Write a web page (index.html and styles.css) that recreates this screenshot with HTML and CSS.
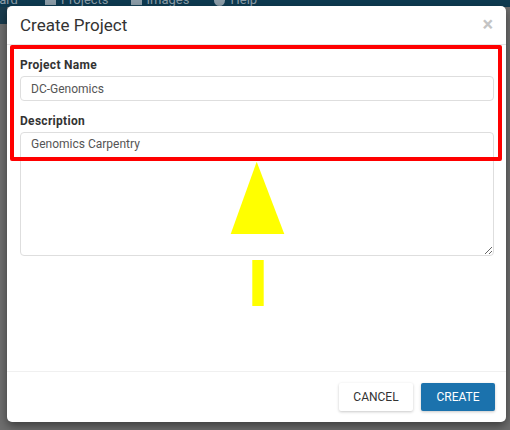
FILE: index.html
```html
<!DOCTYPE html>
<html>
<head>
<meta charset="utf-8">
<title>Create Project</title>
<link rel="stylesheet" href="styles.css">
</head>
<body>
<div class="page">
  <nav class="topnav">
    <div class="nav-inner">
      <span class="nav-item nav-dash">Dashboard</span>
      <span class="nav-item nav-projects"><svg class="nav-icon" viewBox="0 0 12 12"><path d="M0 2h4l1 1.5h7V11H0z" fill="currentColor"/></svg>Projects</span>
      <span class="nav-item nav-images"><svg class="nav-icon" viewBox="0 0 12 12"><rect x="0" y="1" width="12" height="10" fill="currentColor"/></svg>Images</span>
      <span class="nav-item nav-help"><svg class="nav-icon" viewBox="0 0 12 12"><circle cx="6" cy="6" r="6" fill="currentColor"/></svg>Help</span>
    </div>
  </nav>
  <div class="side-strip"></div>
</div>

<div class="modal">
  <div class="modal-header">
    <h4 class="modal-title">Create Project</h4>
    <span class="close">&times;</span>
  </div>
  <div class="modal-body">
    <div class="form-group">
      <label class="field-label" for="pname">Project Name</label>
      <input id="pname" class="form-control" type="text" value="DC-Genomics">
    </div>
    <div class="form-group">
      <label class="field-label" for="pdesc">Description</label>
      <textarea id="pdesc" class="form-control textarea">Genomics Carpentry</textarea>
    </div>
  </div>
  <div class="modal-footer">
    <button class="btn btn-default">CANCEL</button>
    <button class="btn btn-primary">CREATE</button>
  </div>
</div>

<div class="highlight"></div>
<svg class="arrow" width="56" height="146" viewBox="0 0 56 146">
  <polygon points="26.7,0.7 0.7,73 54.3,73" fill="#ffff00"/>
  <rect x="22.3" y="99" width="11.4" height="46" fill="#ffff00"/>
</svg>
</body>
</html>
```

FILE: styles.css
```css
html, body {
  margin: 0;
  padding: 0;
}
body {
  width: 510px;
  height: 430px;
  background: #6e6e6e;
  font-family: Roboto, "Liberation Sans", sans-serif;
  overflow: hidden;
  position: relative;
}
.page {
  display: flex;
  flex-direction: column;
}
.topnav {
  height: 7px;
  background: #0e3a50;
  overflow: hidden;
}
.nav-inner {
  display: flex;
  align-items: center;
  margin-top: -7px;
  margin-left: -45px;
  color: #8b9ca7;
  font-size: 13px;
  line-height: 14px;
  white-space: nowrap;
}
.nav-item {
  display: flex;
  align-items: center;
  gap: 5px;
}
.nav-projects { margin-left: 27px; }
.nav-images { margin-left: 22px; }
.nav-help { margin-left: 25px; }
.nav-icon {
  width: 11px;
  height: 11px;
}
.side-strip {
  width: 7px;
  height: 17px;
  background: #1a3c4e;
}

.modal {
  position: absolute;
  top: 6px;
  left: 7px;
  width: 499px;
  height: 416px;
  background: #fff;
  border-radius: 5px;
  box-shadow: 0 4px 10px rgba(0, 0, 0, 0.45);
  display: flex;
  flex-direction: column;
  box-sizing: border-box;
}
.modal-header {
  display: flex;
  align-items: center;
  justify-content: space-between;
  padding: 9px 13px 9px 13px;
  border-bottom: 1px solid #e5e5e5;
}
.modal-title {
  margin: 0;
  font-size: 17px;
  line-height: 20px;
  font-weight: 400;
  color: #333;
}
.close {
  font-size: 20px;
  line-height: 20px;
  font-weight: 700;
  color: #c4c4c4;
  margin-top: -3px;
}
.modal-body {
  flex: 1;
  padding: 12px 12px 0 13px;
}
.form-group {
  margin-bottom: 11px;
}
.form-group + .form-group {
  padding-top: 1px;
}
.field-label {
  display: block;
  font-size: 12px;
  line-height: 16px;
  font-weight: 700;
  letter-spacing: 0.3px;
  color: #333;
  margin-bottom: 3px;
}
.form-control {
  display: block;
  width: 100%;
  box-sizing: border-box;
  height: 25px;
  border: 1px solid #dedede;
  border-radius: 4px;
  padding: 0 10px;
  font-family: Roboto, "Liberation Sans", sans-serif;
  font-size: 12px;
  line-height: 16px;
  color: #555;
  background: #fff;
  margin: 0;
}
.textarea {
  height: 124px;
  padding: 3px 10px;
  resize: vertical;
}
.modal-footer {
  display: flex;
  justify-content: flex-end;
  gap: 8px;
  padding: 11px 11px 11px 12px;
  border-top: 1px solid #f0f0f0;
}
.btn {
  width: 74px;
  height: 28px;
  border: none;
  border-radius: 2px;
  font-family: Roboto, "Liberation Sans", sans-serif;
  font-size: 12px;
  font-weight: 400;
  padding: 0;
  box-shadow: 0 1px 3px rgba(0, 0, 0, 0.22);
}
.btn-default {
  background: #fff;
  color: #333;
}
.btn-primary {
  background: #1b72ad;
  color: #fff;
}

.highlight {
  position: absolute;
  left: 10px;
  top: 45px;
  width: 492px;
  height: 116px;
  box-sizing: border-box;
  border: 4px solid #ff0000;
  border-radius: 2px;
}
.arrow {
  position: absolute;
  left: 230px;
  top: 161px;
}
```
